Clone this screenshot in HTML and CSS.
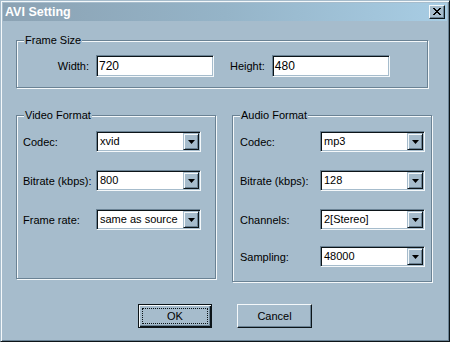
FILE: index.html
```html
<!DOCTYPE html>
<html>
<head>
<meta charset="utf-8">
<link rel="stylesheet" href="styles.css">
</head>
<body>
<div class="window">
  <div class="titlebar">
    <span class="title">AVI Setting</span>
    <span class="close"><svg width="8" height="7" viewBox="0 0 8 7"><path d="M0 0h2v1h1v1h2V1h1V0h2v1H7v1H6v1H5v1h1v1h1v1h1v1H6V6H5V5H3v1H2v1H0V6h1V5h1V4h1V3H2V2H1V1H0z" fill="#000"/></svg></span>
  </div>
  <div class="content">
    <fieldset class="group frame">
      <legend>Frame Size</legend>
      <div class="size-row">
        <span class="size-label first">Width:</span>
        <div class="edit">720</div>
        <span class="size-label">Height:</span>
        <div class="edit">480</div>
      </div>
    </fieldset>
    <div class="formats">
      <fieldset class="group video">
        <legend>Video Format</legend>
        <div class="field"><span class="lbl">Codec:</span><div class="combo"><span class="val">xvid</span><span class="drop"><svg width="7" height="4" viewBox="0 0 7 4"><path d="M0 0h7L3.5 4z" fill="#000"/></svg></span></div></div>
        <div class="field"><span class="lbl">Bitrate (kbps):</span><div class="combo"><span class="val">800</span><span class="drop"><svg width="7" height="4" viewBox="0 0 7 4"><path d="M0 0h7L3.5 4z" fill="#000"/></svg></span></div></div>
        <div class="field"><span class="lbl">Frame rate:</span><div class="combo"><span class="val">same as source</span><span class="drop"><svg width="7" height="4" viewBox="0 0 7 4"><path d="M0 0h7L3.5 4z" fill="#000"/></svg></span></div></div>
      </fieldset>
      <fieldset class="group audio">
        <legend>Audio Format</legend>
        <div class="field"><span class="lbl">Codec:</span><div class="combo"><span class="val">mp3</span><span class="drop"><svg width="7" height="4" viewBox="0 0 7 4"><path d="M0 0h7L3.5 4z" fill="#000"/></svg></span></div></div>
        <div class="field"><span class="lbl">Bitrate (kbps):</span><div class="combo"><span class="val">128</span><span class="drop"><svg width="7" height="4" viewBox="0 0 7 4"><path d="M0 0h7L3.5 4z" fill="#000"/></svg></span></div></div>
        <div class="field"><span class="lbl">Channels:</span><div class="combo"><span class="val">2[Stereo]</span><span class="drop"><svg width="7" height="4" viewBox="0 0 7 4"><path d="M0 0h7L3.5 4z" fill="#000"/></svg></span></div></div>
        <div class="field tight"><span class="lbl">Sampling:</span><div class="combo"><span class="val">48000</span><span class="drop"><svg width="7" height="4" viewBox="0 0 7 4"><path d="M0 0h7L3.5 4z" fill="#000"/></svg></span></div></div>
      </fieldset>
    </div>
    <div class="buttons">
      <button class="btn default"><span class="focus">OK</span></button>
      <button class="btn">Cancel</button>
    </div>
  </div>
</div>
</body>
</html>
```

FILE: styles.css
```css
* { box-sizing: border-box; }
html, body { margin: 0; padding: 0; background: #a6bccc; }
body {
  font-family: "Liberation Sans", Arial, sans-serif;
  font-size: 11px;
  color: #000;
}
.window {
  width: 450px;
  height: 342px;
  background: #a6bccc;
  border: 1px solid;
  border-color: #a6bccc #0c1418 #0c1418 #a6bccc;
  box-shadow: inset 1px 1px 0 #f4f8fa, inset -1px -1px 0 #6a8294;
  padding: 2px;
}
.titlebar {
  height: 18px;
  display: flex;
  align-items: center;
  justify-content: space-between;
  padding: 0 2px 0 2px;
  background: linear-gradient(to right, #8ba2b3 0%, #95b4c8 50%, #a8cde4 100%);
}
.title {
  color: #fff;
  font-weight: bold;
  font-size: 12.5px;
  line-height: 18px;
}
.close {
  width: 16px;
  height: 14px;
  display: flex;
  align-items: center;
  justify-content: center;
  background: #a6bccc;
  border: 1px solid;
  border-color: #f4f8fa #0c1418 #0c1418 #f4f8fa;
  box-shadow: inset -1px -1px 0 #6a8294;
  padding: 0 1px 1px 0;
}
.content {
  padding: 13px 0 0 13px;
}
.group {
  margin: 0;
  padding: 0;
  min-inline-size: 0;
  border: 1px solid #6a8294;
  box-shadow: inset 1px 1px 0 #f4f8fa, 1px 1px 0 #f4f8fa;
}
.group legend {
  padding: 0 1px;
  margin-left: 7px;
  line-height: 13px;
  background: #a6bccc;
}
.frame {
  width: 412px;
  padding: 8px 0 10px 0;
}
.size-row {
  display: flex;
  align-items: center;
}
.size-label {
  margin-left: 16px;
  margin-right: 7px;
}
.size-label.first {
  margin-left: 35px;
  width: 37px;
  margin-right: 7px;
  text-align: right;
}
.edit {
  width: 118px;
  height: 22px;
  background: #fff;
  border: 1px solid;
  border-color: #6a8294 #f4f8fa #f4f8fa #6a8294;
  box-shadow: inset 1px 1px 0 #0c1418, inset -1px -1px 0 #a6bccc;
  padding: 0 0 0 2px;
  font-size: 12px;
  line-height: 20px;
}
.formats {
  display: flex;
  align-items: flex-start;
  gap: 16px;
  margin-top: 21px;
}
.video, .audio {
  width: 200px;
  padding: 9px 0 0 0;
}
.video { padding-bottom: 48px; }
.audio { padding-bottom: 14px; }
.field {
  display: flex;
  align-items: center;
  margin-bottom: 18px;
}
.field:last-child { margin-bottom: 0; }
.audio .field.tight { margin-top: -2px; }
.video .lbl { width: 73px; margin-left: 6px; }
.audio .lbl { width: 80px; margin-left: 7px; }
.combo {
  width: 105px;
  height: 21px;
  display: flex;
  align-items: stretch;
  background: #fff;
  border: 1px solid;
  border-color: #6a8294 #f4f8fa #f4f8fa #6a8294;
  box-shadow: inset 1px 1px 0 #0c1418, inset -1px -1px 0 #a6bccc;
  padding: 1px 1px 1px 1px;
}
.combo .val {
  flex: 1;
  padding-left: 2px;
  line-height: 17px;
  white-space: nowrap;
}
.drop {
  width: 16px;
  display: flex;
  align-items: center;
  justify-content: center;
  background: #a6bccc;
  border: 1px solid;
  border-color: #a6bccc #0c1418 #0c1418 #a6bccc;
  box-shadow: inset 1px 1px 0 #f4f8fa, inset -1px -1px 0 #6a8294;
}
.buttons {
  display: flex;
  justify-content: center;
  gap: 25px;
  margin-top: 22px;
  margin-left: -13px;
}
.btn {
  width: 75px;
  height: 24px;
  font-family: inherit;
  font-size: 11px;
  color: #000;
  background: #a6bccc;
  border: 1px solid;
  border-color: #f4f8fa #0c1418 #0c1418 #f4f8fa;
  box-shadow: inset -1px -1px 0 #6a8294;
  padding: 0;
  margin: 0;
}
.btn.default {
  width: 74px;
  border: 1px solid #0c1418;
  box-shadow: inset 1px 1px 0 #f4f8fa, inset -1px -1px 0 #0c1418, inset -2px -2px 0 #6a8294;
  padding: 3px;
  display: flex;
}
.focus {
  flex: 1;
  border: 1px dotted #0c1418;
  display: flex;
  align-items: center;
  justify-content: center;
}
```
